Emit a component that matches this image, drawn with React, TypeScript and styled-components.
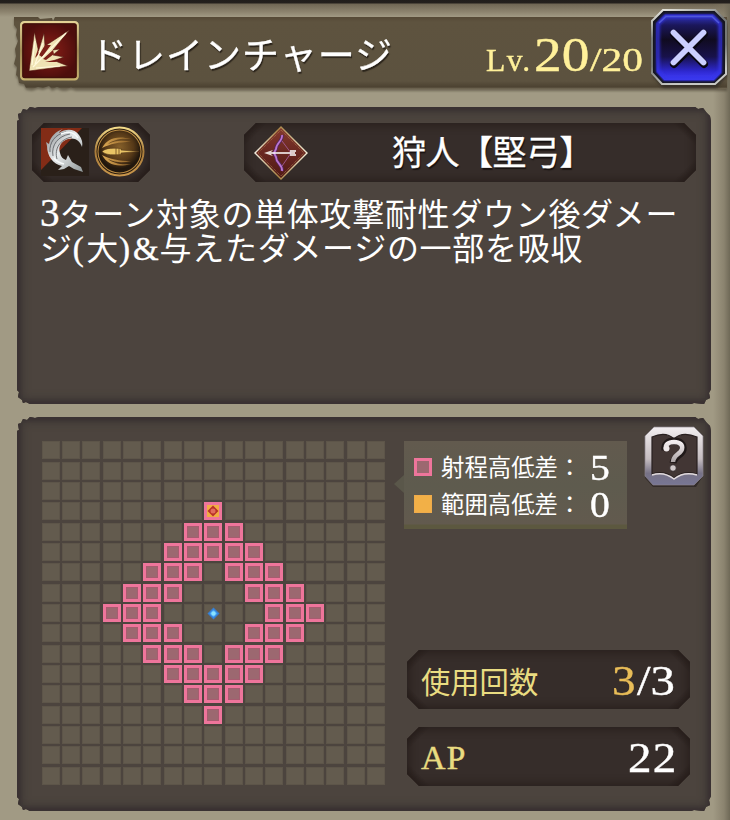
import type { ReactNode } from 'react';
import styled, { createGlobalStyle } from 'styled-components';

const GlobalStyle = createGlobalStyle`
  * {
    box-sizing: border-box;
  }

  body {
    margin: 0;
    background: #9f9882;
  }
`;

const Screen = styled.div`
  width: 730px;
  height: 820px;
  overflow: hidden;
  padding-top: 17px;
  color: #fff;
  font-family: 'Noto Sans CJK JP', sans-serif;
  background:
    linear-gradient(180deg, #211e1c 0, #24201d 3px, transparent 4px),
    linear-gradient(270deg, #6f6957 0, rgba(124, 116, 97, 0.6) 6px, transparent 17px),
    linear-gradient(180deg, #6f6654 4px, #8d846f 12px, #a19a84 17px);
`;

const HeaderBand = styled.div`
  margin-right: 3px;
  filter: drop-shadow(0 2px 1px rgba(60, 52, 38, 0.5));
`;

const Header = styled.header`
  display: flex;
  align-items: flex-start;
  height: 72px;
  margin-left: 14px;
  padding: 4px 0 0 6px;
  background: linear-gradient(180deg, #554936 0, #5e533f 5px, #5c523f 64px, #4c4231 70px, #756c58 72px);
  clip-path: polygon(
    0 0, 24px 0, 26px 2px, 38px 1px, 39px 4px, 41px 0, 100% 0, 100% 100%, 62px 100%,
    57px 98%, 52px 100%, 48px 72px, 43px 70px, 38px 72px, 35px 69px, 29px 71px, 24px 70px,
    18px 72px, 12px 71px, 10px 67px, 5px 66px, 4px 60px, 2px 58px, 3px 50px, 0 47px, 2px 39px,
    1px 32px, 4px 24px, 2px 18px, 3px 12px, 0 8px
  );
`;

const Title = styled.h1`
  margin: 5px 0 0 11px;
  flex: 1;
  font-size: 37px;
  line-height: 54px;
  font-weight: 400;
  letter-spacing: 1px;
  white-space: nowrap;
  -webkit-text-stroke: 0.3px #fff;
  text-shadow: 1px 2px 1px #2b241b;
`;

const Level = styled.div`
  display: flex;
  align-items: baseline;
  margin: 6px 83px 0 0;
  line-height: 56px;
  color: #fff09a;
`;

const Num = styled.span<{ $size: number; $gap?: number; $color?: string }>`
  font-family: 'Liberation Serif', serif;
  font-size: ${props => props.$size}px;
  letter-spacing: ${props => props.$gap ?? 0}px;
  color: ${props => props.$color ?? 'inherit'};
  -webkit-text-stroke: 0.4px currentColor;
`;

/* Digits drawn wider than the face; width is the space they take after stretching */
const WideNum = styled(Num)<{ $width: number; $stretch?: number }>`
  display: inline-block;
  width: ${props => props.$width}px;
  white-space: nowrap;
  transform: scaleX(${props => props.$stretch ?? 1.13});
  transform-origin: left center;
`;

const CloseButton = styled.button`
  position: absolute;
  left: 650px;
  top: 8px;
  width: 78px;
  height: 82px;
  padding: 0;
  border: none;
  background: none;
  cursor: pointer;
`;

const Panel = styled.section<{ $height: number; $top: number }>`
  width: 694px;
  height: ${props => props.$height}px;
  margin: ${props => props.$top}px 0 0 17px;
  background: #4c443e;
  box-shadow: inset 0 0 3px 3px #3a3132, inset 0 0 9px 5px #3b3633;
  clip-path: polygon(
    0 14px, 2px 13px, 1px 7px, 4px 6px, 6px 2px, 10px 3px, 13px 0, 18px 1px, 22px 0,
    calc(100% - 16px) 0, calc(100% - 13px) 2px, calc(100% - 8px) 1px, calc(100% - 4px) 6px,
    calc(100% - 1px) 9px, 100% 15px, 100% calc(100% - 15px), calc(100% - 2px) calc(100% - 11px),
    calc(100% - 1px) calc(100% - 6px), calc(100% - 5px) calc(100% - 4px), calc(100% - 7px) 100%,
    calc(100% - 17px) calc(100% - 1px), calc(100% - 20px) 100%, 13px 100%, 9px calc(100% - 2px),
    6px calc(100% - 1px), 5px calc(100% - 4px), 1px calc(100% - 7px), 2px calc(100% - 12px), 0 calc(100% - 14px)
  );
`;

const SkillPanel = styled(Panel)`
  padding: 16px 15px 0;
`;

const RangePanel = styled(Panel)`
  display: flex;
  padding: 24px 0 0 25px;
`;

const Plate = styled.div<{ $width: number }>`
  display: flex;
  align-items: center;
  width: ${props => props.$width}px;
  height: 59px;
  clip-path: polygon(
    12px 0, calc(100% - 12px) 0, 100% 12px, 100% calc(100% - 12px),
    calc(100% - 12px) 100%, 12px 100%, 0 calc(100% - 12px), 0 12px
  );
  background:
    linear-gradient(135deg, #281f1c 9px, transparent 17px),
    linear-gradient(225deg, #281f1c 9px, transparent 17px),
    linear-gradient(45deg, #281f1c 9px, transparent 17px),
    linear-gradient(315deg, #281f1c 9px, transparent 17px),
    #362d2a;
  box-shadow: inset 0 0 8px 2px #281f1c;
`;

const PlateRow = styled.div`
  display: flex;
  justify-content: space-between;
`;

const AttributePlate = styled(Plate)`
  gap: 5px;
  padding: 0 0 2px 9px;
`;

const JobPlate = styled(Plate)`
  padding-left: 10px;
`;

const JobName = styled.div`
  flex: 1;
  padding: 0 0 3px 84px;
  font-size: 34px;
  line-height: 50px;
  letter-spacing: -0.5px;
  -webkit-text-stroke: 0.3px #fff;
  text-shadow: 1px 2px 1px #171110;
`;

const Description = styled.p`
  margin: 13px 0 0 8px;
  font-size: 32px;
  line-height: 34px;
  letter-spacing: 0.7px;
  white-space: nowrap;

  span {
    line-height: 20px;
  }
`;

const RangeGrid = styled.div`
  display: grid;
  grid-template-columns: repeat(17, 18px);
  grid-auto-rows: 18px;
  gap: 2.33px;
  width: 344px;
  margin: 0.4px 0.3px 0 -0.3px;
`;

const Cell = styled.div<{ $inRange: boolean }>`
  display: flex;
  align-items: center;
  justify-content: center;
  background: ${props => (props.$inRange ? '#9c6870' : '#635b4e')};
  border: ${props => (props.$inRange ? '3px solid #ee759b' : '1px solid #5d5549')};
  box-shadow: ${props => (props.$inRange ? 'inset 0 0 0 1px #a75c70' : 'none')};
`;

const TargetCell = styled(Cell)`
  background: #f2ad42;
  box-shadow: none;
`;

const InfoColumn = styled.div`
  display: flex;
  flex-direction: column;
  width: 300px;
  margin-left: 18px;
`;

const InfoTop = styled.div`
  display: flex;
  height: 209px;
`;

const Legend = styled.div`
  position: relative;
  width: 223px;
  height: 88px;
  padding: 7px 10px 0 10px;
  background: linear-gradient(180deg, #625a4e 0, #5e5b4e 45px, #625a4e 83px, #5c583f 84px);

  &::before {
    content: '';
    position: absolute;
    left: -10px;
    top: 34px;
    border: solid transparent;
    border-width: 9px 10px 9px 0;
    border-right-color: #5a574a;
  }
`;

const LegendRow = styled.div`
  display: flex;
  align-items: center;
  height: 37px;
  font-size: 23.4px;
  line-height: 37px;
  white-space: nowrap;
`;

const Swatch = styled.i<{ $outlined?: boolean }>`
  width: 18px;
  height: 18px;
  margin-right: 9px;
  background: ${props => (props.$outlined ? '#9c6870' : '#f2b047')};
  border: ${props => (props.$outlined ? '3px solid #ee759b' : '1px solid #efab4b')};
`;

const LegendValue = styled(Num)`
  width: 20px;
  margin-left: 9px;
  padding-top: 3px;
  text-align: center;
  transform: scaleX(1.1);
`;

const HelpButton = styled.button`
  width: 60px;
  height: 62px;
  margin: -15px 0 0 17px;
  padding: 0;
  border: none;
  background: none;
  cursor: pointer;
`;

const StatPlate = styled(Plate)`
  justify-content: space-between;
  margin: 0 0 18px 3px;
  padding: 0 14px 0 14px;
`;

const StatLabel = styled.span`
  color: #e9dc81;
  font-size: 29.3px;
  line-height: 44px;
`;

const StatValue = styled.span`
  display: flex;
  padding-top: 2px;
  line-height: 50px;
`;

const Icon = styled.svg`
  display: block;
  flex: none;
`;

function SkillIcon() {
  return (
    <Icon width="59" height="60" viewBox="0 0 59 60">
      <defs>
        <radialGradient id="skillBg">
          <stop offset="0.4" stopColor="#721813" />
          <stop offset="1" stopColor="#4d0e0c" />
        </radialGradient>
        <linearGradient id="skillRim" x2="0" y2="1">
          <stop stopColor="#e3d295" />
          <stop offset="0.5" stopColor="#a18c56" />
          <stop offset="1" stopColor="#c6b06e" />
        </linearGradient>
      </defs>
      <rect x="1.2" y="1.2" width="56.5" height="57" rx="3" fill="url(#skillBg)" stroke="url(#skillRim)" strokeWidth="2.4" />
      <rect x="3" y="3" width="53" height="53.5" rx="2" fill="none" stroke="#42100b" strokeWidth="1.5" />
      <path
        d="M9 50L14.5 11L18.500 30L24 12L25 25L49.500 9L33 29L40 28L33 34L44 36L34 39.500L48 45Z"
        fill="#efe3b4"
        stroke="#4f120d"
        strokeWidth="0.6"
      />
      <path d="M15 37L18 28L19 33ZM19 34L25 24L31 24L22 36ZM23 38L33 29L34 33L26 39ZM25 41L34 39L37 41Z" fill="#7c2018" />
      <path d="M12 44L15 20M15 43L23 22M13 46L46 12M16 47L40 45" fill="none" stroke="#fff9dc" strokeWidth="1.2" />
    </Icon>
  );
}

function CloseIcon() {
  return (
    <Icon width="78" height="82" viewBox="0 0 78 82">
      <defs>
        <linearGradient id="closeBody" x2="0" y2="1">
          <stop stopColor="#3337c8" />
          <stop offset="0.16" stopColor="#1b175c" />
          <stop offset="0.38" stopColor="#100b20" />
          <stop offset="0.64" stopColor="#18124b" />
          <stop offset="0.86" stopColor="#2e28d0" />
          <stop offset="1" stopColor="#4340ff" />
        </linearGradient>
        <linearGradient id="closeRim" x2="0.3" y2="1">
          <stop stopColor="#f0f0e8" />
          <stop offset="0.35" stopColor="#777a79" />
          <stop offset="0.7" stopColor="#747774" />
          <stop offset="1" stopColor="#c8c9c5" />
        </linearGradient>
        <filter id="closeGlow" x="-20%" y="-20%" width="140%" height="140%">
          <feGaussianBlur stdDeviation="1.8" />
        </filter>
      </defs>
      <path d="M14 5H67L77 17V68L67 80H13L3 69V15Z" fill="#2b2721" opacity="0.7" filter="url(#closeGlow)" />
      <path d="M13 2H65L76 13V66L65 76H12L2 65V13Z" fill="#15151c" stroke="url(#closeRim)" strokeWidth="2" />
      <path d="M15 6.500H63L71.500 15V65L64 72.500H14L6.500 64V15Z" fill="url(#closeBody)" stroke="#201d70" strokeWidth="1" />
      <path d="M15.500 8H63L70 16V64L63 71H15L8 63V16Z" fill="none" stroke="#3435e8" strokeWidth="3" filter="url(#closeGlow)" />
      <path d="M9 15L16 8.500H62L69 15" fill="none" stroke="#5058d8" strokeWidth="1.5" />
      <path d="M24 26L54 56M54 26L24 56" stroke="#090713" strokeWidth="8" strokeLinecap="round" />
      <path d="M23.500 24.500L53.500 54.500M53.500 24.500L23.500 54.500" stroke="#cbcfff" strokeWidth="5.800" strokeLinecap="round" />
    </Icon>
  );
}

function SlashIcon() {
  return (
    <Icon width="48" height="48" viewBox="0 0 48 48">
      <defs>
        <linearGradient id="slashSteel" x2="1" y2="1">
          <stop stopColor="#7c8082" />
          <stop offset="0.45" stopColor="#e8ebec" />
          <stop offset="1" stopColor="#8f9798" />
        </linearGradient>
      </defs>
      <path d="M0 0H48V48H0Z" fill="#2a2019" />
      <path d="M0 0H41L0 42Z" fill="#832c16" />
      <path
        d="M41 19C39 12 33 9 27 11C20 13 17 19 19 25C20 29 22 31 25 32L27 27L31 34L40 39L42 44L33 41L28 38L23 41L17 42L21 38C12 36 6 28 6 18L5 14L8 16C9 9 15 3 22 1C19 3 18 4 18 5C25 0 34 1 38 7C41 11 42 15 41 19Z"
        fill="url(#slashSteel)"
      />
      <path d="M9 24C8 15 14 6 25 4M12 28C10 17 17 8 29 6M16 31C13 21 19 11 31 9" fill="none" stroke="#54575a" strokeWidth="0.8" />
      <path d="M13 30C15 33 18 35 23 36M20 6C27 3 33 4 37 10" fill="none" stroke="#f7fafa" strokeWidth="1.4" />
    </Icon>
  );
}

function PierceIcon() {
  return (
    <Icon width="51" height="51" viewBox="0 0 51 51">
      <defs>
        <radialGradient id="pierceBg" cy="0.4">
          <stop stopColor="#86602a" />
          <stop offset="0.65" stopColor="#563918" />
          <stop offset="1" stopColor="#21170d" />
        </radialGradient>
        <linearGradient id="pierceRim" x2="0" y2="1">
          <stop stopColor="#f4db89" />
          <stop offset="0.5" stopColor="#a87b3a" />
          <stop offset="1" stopColor="#c9964b" />
        </linearGradient>
        <linearGradient id="pierceTrail">
          <stop stopColor="#dba853" />
          <stop offset="1" stopColor="#8c6028" />
        </linearGradient>
      </defs>
      <circle cx="25.500" cy="25.500" r="24" fill="#271a0d" stroke="url(#pierceRim)" strokeWidth="2" />
      <circle cx="25.500" cy="25.500" r="21.500" fill="url(#pierceBg)" stroke="#b98a43" strokeWidth="1.100" />
      <path
        d="M8 22C13 13 22 9 37 13C26 12 19 14 14 18C22 14 29 14 37 16C25 16 16 18 8 22ZM8 29C13 38 22 42 37 38C26 39 19 37 14 33C22 37 29 37 37 35C25 35 16 33 8 29Z"
        fill="url(#pierceTrail)"
      />
      <path d="M8 25.500C12 21.500 20 22 27 22.500V24L45 25.500L27 27V28.500C20 29 12 29.500 8 25.500Z" fill="#e9c465" stroke="#54371a" strokeWidth="0.600" />
      <path d="M22 22V29M25 22V29" stroke="#6a471c" strokeWidth="0.800" />
    </Icon>
  );
}

function BowIcon() {
  return (
    <Icon width="54" height="54" viewBox="0 0 54 54">
      <defs>
        <linearGradient id="bowBg" x2="0" y2="1">
          <stop stopColor="#84382d" />
          <stop offset="1" stopColor="#4e1714" />
        </linearGradient>
        <linearGradient id="bowRim">
          <stop stopColor="#f2eee0" />
          <stop offset="0.45" stopColor="#a98444" />
          <stop offset="1" stopColor="#f4efd8" />
        </linearGradient>
      </defs>
      <path d="M27 1L53 27L27 53L1 27Z" fill="url(#bowBg)" stroke="url(#bowRim)" strokeWidth="1.400" />
      <path d="M27 4L50 27L27 50L4 27Z" fill="none" stroke="#b78a50" strokeWidth="0.700" strokeDasharray="1 1" />
      <path d="M28 9C29 15 22 17 22 23L20 27L22 31C22 38 29 38 28 45" fill="none" stroke="#54295c" strokeWidth="3.500" />
      <path d="M28 9C29 15 22 17 22 23L20 27L22 31C22 38 29 38 28 45" fill="none" stroke="#bd75d1" strokeWidth="1.800" />
      <path d="M28 15L37 27L28 40" fill="none" stroke="#aa61a3" strokeWidth="0.800" />
      <path d="M13 27H41M36 25H42M36 29H42" stroke="#fff" strokeWidth="1.300" />
      <path d="M10 27L19 24L16 27L19 30Z" fill="#e7ddd8" />
    </Icon>
  );
}

function BookIcon() {
  return (
    <Icon width="60" height="62" viewBox="0 0 60 62">
      <defs>
        <linearGradient id="bookFrame" x2="0" y2="1">
          <stop stopColor="#f2eef0" />
          <stop offset="0.55" stopColor="#c5bdc0" />
          <stop offset="0.8" stopColor="#777286" />
          <stop offset="1" stopColor="#777695" />
        </linearGradient>
        <linearGradient id="bookMark" x2="0" y2="1">
          <stop stopColor="#f4eef0" />
          <stop offset="1" stopColor="#aaa3a4" />
        </linearGradient>
      </defs>
      <path d="M10 3H51L59 12V50L52 61H9L1 52V12Z" fill="#262120" opacity="0.650" />
      <path d="M10 1H50L59 10V50L50 59H9L1 50V10Z" fill="url(#bookFrame)" stroke="#89828b" strokeWidth="0.700" />
      <path d="M8 11C17 7 25 8 30 13C35 8 43 7 53 11V48C43 45 35 48 30 52C25 48 17 45 8 48Z" fill="#423634" stroke="#292020" strokeWidth="1.200" />
      <path d="M8 49C17 46 25 49 30 53C35 49 43 46 53 49" fill="none" stroke="#e1dadd" strokeWidth="1.500" />
      <path d="M21 24C20 18 24 15 30 15C36 15 40 18 39 24C38 29 30 30 29 37" fill="none" stroke="#201919" strokeWidth="7" />
      <path d="M22 23C21 19 24 16 30 16C36 16 39 19 38 23C37 28 29 29 29 36" fill="none" stroke="url(#bookMark)" strokeWidth="4.500" />
      <circle cx="22.500" cy="22.500" r="3" fill="#eee8e9" />
      <circle cx="29" cy="42" r="3.300" fill="#d0c9ca" stroke="#292122" strokeWidth="0.800" />
    </Icon>
  );
}

function TargetMark() {
  return (
    <Icon width="12" height="12" viewBox="0 0 12 12">
      <path d="M6 0.500L11.500 6L6 11.500L0.500 6Z" fill="#b93128" />
      <circle cx="6" cy="6" r="2.500" fill="#e36b5d" />
    </Icon>
  );
}

function UnitMark() {
  return (
    <Icon width="13" height="13" viewBox="0 0 13 13">
      <path d="M6.500 0.500L12.500 6.500L6.500 12.500L0.500 6.500Z" fill="#367fd3" />
      <path d="M6.500 2.500L10.500 6.500L6.500 10.500L2.500 6.500Z" fill="#46a5fa" />
      <circle cx="6.500" cy="6.500" r="2.200" fill="#8be3ff" />
    </Icon>
  );
}

const GRID_SIZE = 17;
const CENTER = 8;
const MIN_RANGE = 3;
const MAX_RANGE = 5;

function RangeMap() {
  const cells: ReactNode[] = [];
  for (let row = 0; row < GRID_SIZE; row++) {
    for (let col = 0; col < GRID_SIZE; col++) {
      const distance = Math.abs(row - CENTER) + Math.abs(col - CENTER);
      const inRange = distance >= MIN_RANGE && distance <= MAX_RANGE;
      const key = `${row}-${col}`;
      if (col === CENTER && row === CENTER - MAX_RANGE) {
        cells.push(<TargetCell key={key} $inRange><TargetMark /></TargetCell>);
      } else {
        cells.push(<Cell key={key} $inRange={inRange}>{distance === 0 && <UnitMark />}</Cell>);
      }
    }
  }
  return <RangeGrid>{cells}</RangeGrid>;
}

const App = () => {
  return (
    <Screen>
      <GlobalStyle />
      <HeaderBand>
        <Header>
          <SkillIcon />
          <Title>ドレインチャージ</Title>
          <Level>
            <WideNum $size={31} $gap={1.5} $width={48} $stretch={1.02}>Lv.</WideNum>
            <WideNum $size={49} $width={56}>20</WideNum>
            <WideNum $size={34.5} $width={54} $stretch={1.2}>/20</WideNum>
          </Level>
        </Header>
      </HeaderBand>
      <CloseButton aria-label="close">
        <CloseIcon />
      </CloseButton>

      <SkillPanel $height={297} $top={18}>
        <PlateRow>
          <AttributePlate $width={118}>
            <SlashIcon />
            <PierceIcon />
          </AttributePlate>
          <JobPlate $width={452}>
            <BowIcon />
            <JobName>狩人【堅弓】</JobName>
          </JobPlate>
        </PlateRow>
        <Description>
          <Num $size={39}>3</Num>ターン対象の単体攻撃耐性ダウン後ダメー
          <br />
          ジ<Num $size={33} $gap={2.5}>(</Num>大<Num $size={33} $gap={3}>)</Num><Num $size={33} $gap={1}>&amp;</Num>与えたダメージの一部を吸収
        </Description>
      </SkillPanel>

      <RangePanel $height={394} $top={13}>
        <RangeMap />
        <InfoColumn>
          <InfoTop>
            <Legend>
              <LegendRow>
                <Swatch $outlined />
                射程高低差：
                <LegendValue $size={36}>5</LegendValue>
              </LegendRow>
              <LegendRow>
                <Swatch />
                範囲高低差：
                <LegendValue $size={36}>0</LegendValue>
              </LegendRow>
            </Legend>
            <HelpButton aria-label="help">
              <BookIcon />
            </HelpButton>
          </InfoTop>
          <StatPlate $width={283}>
            <StatLabel>使用回数</StatLabel>
            <StatValue>
              <WideNum $size={42} $width={25} $stretch={1.12} $color="#e9bd58">3</WideNum>
              <WideNum $size={42} $width={39} $stretch={1.16}>/3</WideNum>
            </StatValue>
          </StatPlate>
          <StatPlate $width={283}>
            <StatLabel>
              <Num $size={34} $gap={1}>AP</Num>
            </StatLabel>
            <StatValue>
              <WideNum $size={42} $gap={1} $width={48} $stretch={1.12}>22</WideNum>
            </StatValue>
          </StatPlate>
        </InfoColumn>
      </RangePanel>
    </Screen>
  );
};

export default App;
